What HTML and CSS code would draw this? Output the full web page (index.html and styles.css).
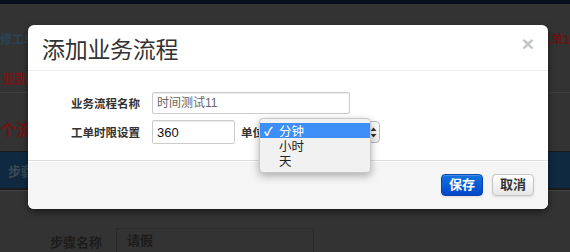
FILE: index.html
```html
<!DOCTYPE html>
<html lang="zh-CN">
<head>
  <meta charset="UTF-8">
  <title>添加业务流程</title>
  <link rel="stylesheet" href="styles.css">
</head>
<body>
  <div class="topbar"></div>

  <div class="page">
    <div class="page-row row-head">
      <span class="crumb">修工单</span>
      <span class="crumb-red">工单1</span>
    </div>
    <div class="page-row row-name">
      <span class="name-red">亚凯流</span>
    </div>
    <div class="page-row row-count">
      <span class="count-red">个流</span>
    </div>
    <div class="page-row row-tab">
      <span class="tab-text">步骤</span>
    </div>
    <div class="page-row row-form">
      <span class="form-label">步骤名称</span>
      <div class="form-input">请假</div>
    </div>
  </div>

  <div class="modal">
    <div class="modal-header">
      <h3>添加业务流程</h3>
      <span class="close">×</span>
    </div>
    <div class="modal-body">
      <div class="field">
        <label>业务流程名称</label>
        <div class="input input-name">时间测试11</div>
      </div>
      <div class="field">
        <label>工单时限设置</label>
        <div class="inline">
          <div class="input input-time">360</div>
          <span class="unit">单位</span>
          <div class="select">
            <span class="arrows">
              <svg width="7" height="11" viewBox="0 0 7 11"><path d="M3.5 0.5 L6.5 4 H0.5 Z M3.5 10.5 L6.5 7 H0.5 Z" fill="#333"/></svg>
            </span>
            <ul class="dropdown">
              <li class="active"><span class="check">✓</span>分钟</li>
              <li><span class="check"></span>小时</li>
              <li><span class="check"></span>天</li>
            </ul>
          </div>
        </div>
      </div>
    </div>
    <div class="modal-footer">
      <button class="btn btn-primary">保存</button>
      <button class="btn">取消</button>
    </div>
  </div>
</body>
</html>
```

FILE: styles.css
```css
body {
  margin: 0;
  width: 570px;
  height: 252px;
  overflow: hidden;
  background: #333;
  font-family: "Liberation Sans", "Noto Sans CJK SC", sans-serif;
  position: relative;
}

.topbar {
  height: 4px;
  background: #06101c;
}

/* page behind the modal, dimmed */
.page-row {
  display: flex;
  justify-content: space-between;
  align-items: center;
}

.row-head {
  height: 58px;
  padding-top: 10px;
  box-sizing: border-box;
}

.crumb {
  margin-left: 0;
  font-size: 12px;
  font-weight: bold;
  color: #2a4457;
}

.crumb-red {
  font-size: 12px;
  font-weight: bold;
  color: #6a1212;
  margin-right: 0;
}

.row-name {
  height: 30px;
  border-bottom: 1px solid #3d3d3d;
}

.name-red {
  font-size: 13px;
  font-weight: bold;
  color: #701818;
  margin-left: 2px;
}

.row-count {
  height: 58px;
  align-items: flex-end;
  padding-bottom: 10px;
  box-sizing: border-box;
}

.count-red {
  margin-left: 0;
  font-size: 16px;
  font-weight: bold;
  color: #701414;
}

.row-tab {
  height: 36px;
  background: #0f2a40;
  border-top: 1px solid #1a1a1a;
  border-bottom: 2px solid #1a1a1a;
  box-shadow: 0 1px 0 #444;
}

.tab-text {
  margin-left: 8px;
  font-size: 13px;
  font-weight: bold;
  color: #3b4a55;
}

.row-form {
  justify-content: flex-start;
  padding: 38px 0 0 50px;
  gap: 14px;
}

.form-label {
  font-size: 13px;
  font-weight: bold;
  color: #1c1c1c;
}

.form-input {
  width: 186px;
  height: 24px;
  border: 1px solid #2a2a2a;
  padding-left: 10px;
  font-size: 13px;
  line-height: 24px;
  color: #1c1c1c;
  font-weight: bold;
}

/* modal */
.modal {
  position: absolute;
  left: 28px;
  top: 25px;
  width: 520px;
  background: #fff;
  border-radius: 6px;
  box-shadow: 0 3px 7px rgba(0, 0, 0, 0.5);
}

.modal-header {
  height: 45px;
  border-bottom: 1px solid #eee;
  padding: 0 14px;
  display: flex;
  justify-content: space-between;
  align-items: center;
}

.modal-header h3 {
  margin: 0;
  font-size: 23px;
  font-weight: normal;
  color: #333;
  letter-spacing: -0.3px;
}

.close {
  font-size: 21px;
  font-weight: bold;
  color: #c4c4c4;
  margin-top: -8px;
  margin-right: 0;
}

.modal-body {
  height: 89px;
  padding-top: 21px;
  box-sizing: border-box;
}

.field {
  display: grid;
  grid-template-columns: 112px auto;
  column-gap: 12px;
  align-items: center;
  margin-bottom: 6px;
}

.field label {
  text-align: right;
  font-size: 11.5px;
  font-weight: bold;
  color: #333;
}

.input {
  box-sizing: border-box;
  border: 1px solid #ccc;
  border-radius: 2px;
  box-shadow: inset 0 1px 1px rgba(0, 0, 0, 0.08);
  padding: 0 4px;
}

.input-name {
  width: 198px;
  height: 22px;
  line-height: 20px;
  font-size: 12px;
  color: #666;
}

.inline {
  display: flex;
  align-items: center;
}

.input-time {
  width: 83px;
  height: 24px;
  line-height: 23px;
  font-size: 13px;
  color: #111;
}

.unit {
  margin-left: 6px;
  font-size: 11.5px;
  font-weight: bold;
  color: #333;
}

.select {
  position: relative;
  margin-left: 6px;
  width: 110px;
  height: 22px;
  box-sizing: border-box;
  border: 1px solid #bbb;
  border-radius: 4px;
  background: linear-gradient(#fff, #ececec);
  display: flex;
  justify-content: flex-end;
  align-items: center;
}

.arrows {
  display: flex;
  margin-right: 2px;
}

.dropdown {
  position: absolute;
  left: -12px;
  top: -4px;
  width: 110px;
  margin: 0;
  padding: 4px 0;
  list-style: none;
  background: #f1f1f1;
  border: 1px solid #c8c8c8;
  border-radius: 4px;
  box-shadow: 0 3px 8px rgba(0, 0, 0, 0.3);
}

.dropdown li {
  height: 15px;
  display: flex;
  align-items: center;
  font-size: 12.5px;
  color: #222;
}

.dropdown li.active {
  background: #3d8ef6;
  color: #fff;
}

.check {
  width: 19px;
  padding-left: 4px;
  box-sizing: border-box;
  font-size: 12px;
  font-weight: bold;
}

.modal-footer {
  height: 49px;
  box-sizing: border-box;
  background: #f5f5f5;
  border-top: 1px solid #ddd;
  border-radius: 0 0 6px 6px;
  box-shadow: inset 0 1px 0 #fff;
  display: flex;
  justify-content: flex-end;
  align-items: flex-start;
  gap: 9px;
  padding: 13px 14px 0 0;
}

.btn {
  width: 42px;
  height: 22px;
  padding: 0;
  border: 1px solid #c5c5c5;
  border-radius: 4px;
  background: linear-gradient(#fff, #e6e6e6);
  box-shadow: inset 0 1px 0 rgba(255, 255, 255, 0.2), 0 1px 2px rgba(0, 0, 0, 0.1);
  font-family: "Liberation Sans", "Noto Sans CJK SC", sans-serif;
  font-size: 13px;
  font-weight: bold;
  color: #333;
  line-height: 20px;
}

.btn-primary {
  border-color: #0444b0;
  background: linear-gradient(#0f74e0, #0446c8);
  color: #fff;
}
```
